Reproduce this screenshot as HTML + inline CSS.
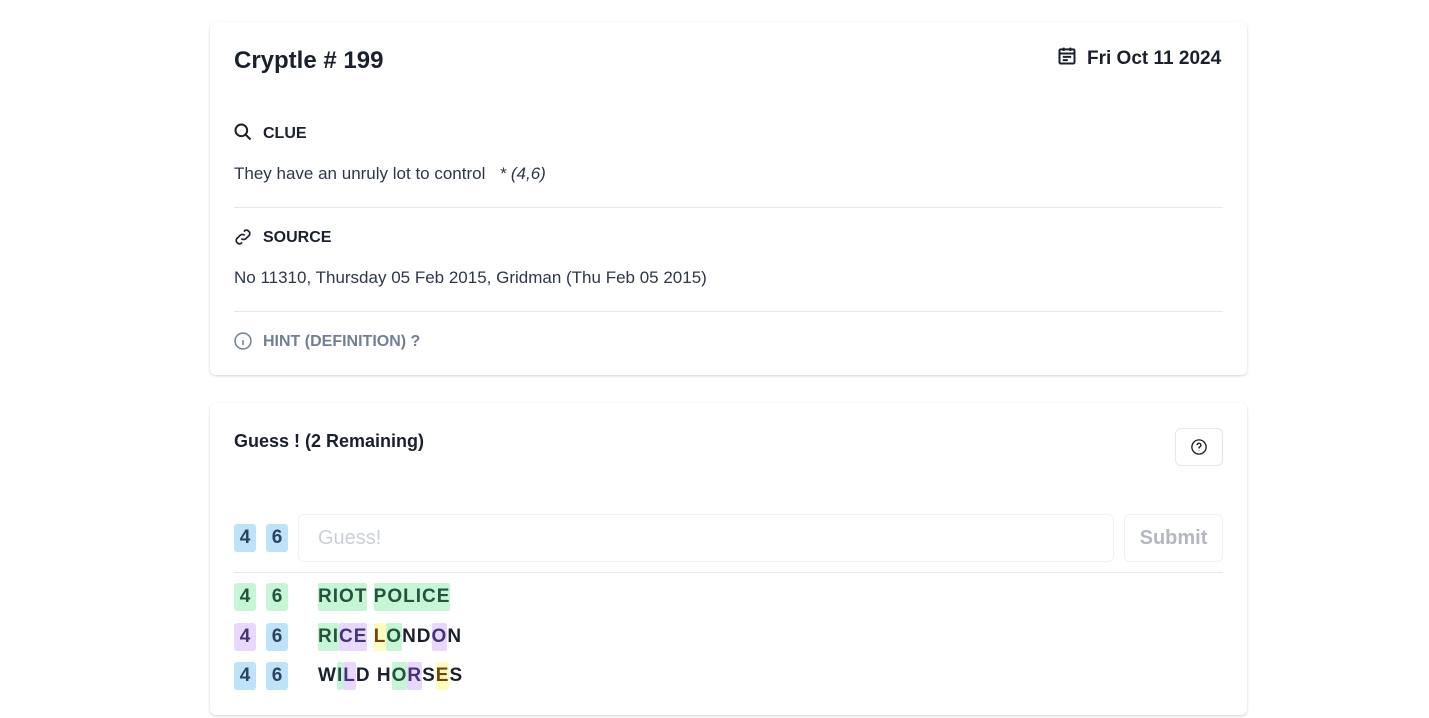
<!DOCTYPE html>
<html><head><meta charset="utf-8"><style>
*{box-sizing:border-box;margin:0;padding:0}
body{width:1429px;height:718px;background:#fff;font-family:"Liberation Sans",sans-serif;color:#1a202c;position:relative;overflow:hidden}
.card{position:absolute;left:210px;width:1037px;background:#fff;border-radius:6px;box-shadow:0 1px 3px rgba(0,0,0,.12),0 1px 2px rgba(0,0,0,.06)}
.a{position:absolute}
.h{font-weight:bold}
.hr{position:absolute;left:24px;right:24px;height:1px;background:#e2e8f0}
.nb{position:absolute;width:22px;height:28px;border-radius:3px;font-weight:bold;font-size:19px;text-align:center;line-height:28px;color:#2d3748}
.g{background:#c6f6d5;color:#22543d}.p{background:#e9d8fd;color:#44337a}.b{background:#bee3f8;color:#2a4365}.y{background:#fefcbf;color:#744210}
.w{position:absolute;left:318px;font-weight:bold;font-size:19px;letter-spacing:1px;height:28px;line-height:28px;white-space:pre}
.w span{display:inline-block;border-radius:2px}
</style></head><body>
<div class="card" style="top:22px;height:353px">
  <div class="a h" style="left:24px;top:25px;font-size:24px">Cryptle # 199</div>
  <svg class="a" style="left:847px;top:24px" width="20" height="20" viewBox="0 0 24 24" fill="none" stroke="#1a202c" stroke-width="2.4"><rect x="3" y="4" width="18" height="17" rx="1.5"/><path d="M8 2v4M16 2v4M3 9h18M7 13h10M7 17h6"/></svg>
  <div class="a h" style="left:877px;top:26px;font-size:19px">Fri Oct 11 2024</div>

  <svg class="a" style="left:23px;top:100px" width="20" height="20" viewBox="0 0 24 24" fill="none" stroke="#1a202c" stroke-width="2.4"><circle cx="10" cy="10" r="7"/><path d="M15 15l6 6"/></svg>
  <div class="a h" style="left:53px;top:103px;font-size:16px">CLUE</div>
  <div class="a" style="left:24px;top:142px;font-size:17px;color:#2d3748">They have an unruly lot to control &nbsp;&nbsp;<i>* (4,6)</i></div>
  <div class="hr" style="top:185px"></div>

  <svg class="a" style="left:23px;top:205px" width="20" height="20" viewBox="0 0 24 24" fill="none" stroke="#1a202c" stroke-width="2"><path d="M10 14a4 4 0 0 0 5.5 0l4-4a4 4 0 0 0-5.5-5.5l-1 1"/><path d="M14 10a4 4 0 0 0-5.5 0l-4 4a4 4 0 0 0 5.5 5.5l1-1"/></svg>
  <div class="a h" style="left:53px;top:207px;font-size:16px">SOURCE</div>
  <div class="a" style="left:24px;top:246px;font-size:17px;color:#2d3748">No 11310, Thursday 05 Feb 2015, Gridman (Thu Feb 05 2015)</div>
  <div class="hr" style="top:289px"></div>

  <svg class="a" style="left:23px;top:309px" width="20" height="20" viewBox="0 0 24 24" fill="none" stroke="#718096" stroke-width="1.8"><circle cx="12" cy="12" r="9.5"/><path d="M12 11v6M12 7.5v.5"/></svg>
  <div class="a h" style="left:53px;top:311px;font-size:16px;color:#718096">HINT (DEFINITION) ?</div>
</div>

<div class="card" style="top:403px;height:312px">
  <div class="a h" style="left:24px;top:28px;font-size:18px">Guess ! (2 Remaining)</div>
  <div class="a" style="left:965px;top:25px;width:48px;height:38px;border:1px solid #e2e8f0;border-radius:6px"></div>
  <svg class="a" style="left:980px;top:35px" width="18" height="18" viewBox="0 0 24 24" fill="none" stroke="#1a202c" stroke-width="1.8"><circle cx="12" cy="12" r="9.5"/><path d="M9.5 9.5a2.5 2.5 0 1 1 3.5 2.3c-.7.3-1 .8-1 1.5v.7M12 16.8v.4"/></svg>
</div>

<div class="nb b" style="left:234px;top:524px">4</div>
<div class="nb b" style="left:266px;top:524px">6</div>
<div class="a" style="left:298px;top:514px;width:816px;height:48px;border:1px solid #edf2f7;border-radius:6px;font-size:20px;color:#cbd0d8;padding:12px 19px">Guess!</div>
<div class="a" style="left:1124px;top:514px;width:99px;height:48px;border:1px solid #edf2f7;border-radius:6px;font-size:20px;font-weight:bold;color:#b4b8be;text-align:center;line-height:46px">Submit</div>
<div class="a" style="left:234px;top:572px;width:989px;height:1px;background:#e2e8f0"></div>

<div class="nb g" style="left:234px;top:583px">4</div><div class="nb g" style="left:266px;top:583px">6</div>
<div class="w" style="top:583px"><span class="g">RIOT</span> <span class="g">POLICE</span></div>

<div class="nb p" style="left:234px;top:623px">4</div><div class="nb b" style="left:266px;top:623px">6</div>
<div class="w" style="top:623px"><span class="g">RI</span><span class="p">CE</span> <span class="y">L</span><span class="g">O</span>ND<span class="p">O</span>N</div>

<div class="nb b" style="left:234px;top:662px">4</div><div class="nb b" style="left:266px;top:662px">6</div>
<div class="w" style="top:662px">W<span class="g">I</span><span class="p">L</span>D H<span class="g">O</span><span class="p">R</span>S<span class="y">E</span>S</div>
</body></html>
